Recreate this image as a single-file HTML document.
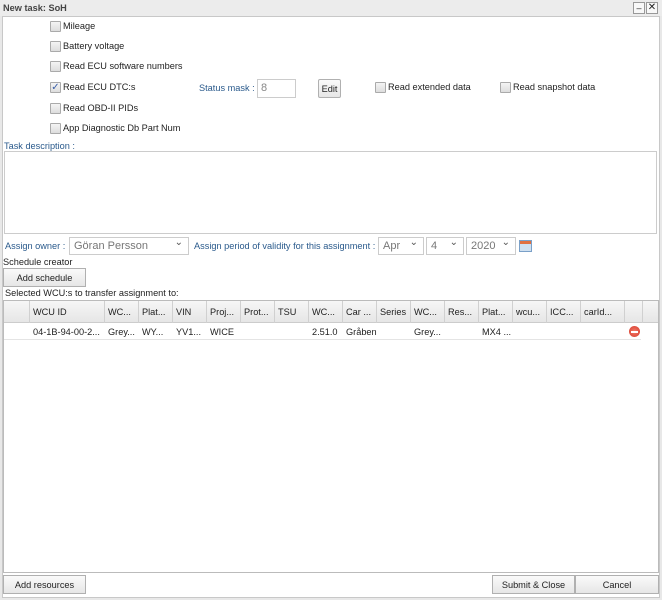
<!DOCTYPE html>
<html><head><meta charset="utf-8"><style>
*{box-sizing:border-box;margin:0;padding:0}
body{width:662px;height:600px;background:#e8e8e8;font-family:"Liberation Sans",sans-serif;font-size:9.2px;color:#222;position:relative;overflow:hidden}
.a{position:absolute;white-space:nowrap}
.cb{position:absolute;width:11px;height:11px;border:1px solid #aaa;background:linear-gradient(#f4f4f4,#ddd);border-radius:1px}
.lbl{color:#2a5a8c}
.btn{position:absolute;border:1px solid #b0b0b0;background:linear-gradient(#fafafa,#e6e6e6);text-align:center;font-size:9.2px;color:#222}
.sel{position:absolute;height:18px;border:1px solid #ccc;background:#fff;color:#777;font-size:11px;padding:2px 4px}
.sel:after{content:"⌄";position:absolute;right:5px;top:-1px;font-size:10px;color:#555}
.th{position:absolute;top:0;height:22px;border-right:1px solid #d0d0d0;padding:6px 3px;overflow:hidden;font-size:9.2px}
.td{position:absolute;top:0;height:17px;padding:4px 3px;font-size:9.2px}
</style></head><body>
<div class="a" style="left:0;top:0;width:662px;height:16px;background:#ececec"></div>
<div class="a" style="left:3px;top:3px;font-weight:bold;color:#444;font-size:9.2px">New task: SoH</div>
<div class="a" style="left:633px;top:2px;width:12px;height:12px;border:1px solid #999;background:#f8f8f8;font-size:9px;text-align:center;line-height:10px">–</div>
<div class="a" style="left:646px;top:2px;width:12px;height:12px;border:1px solid #999;background:#f8f8f8;font-size:10px;text-align:center;line-height:10px">✕</div>
<div class="a" style="left:2px;top:16px;width:658px;height:582px;background:#fff;border:1px solid #c8c8c8"></div>

<div class="cb" style="left:50px;top:21px"></div><div class="a" style="left:63px;top:21px">Mileage</div>
<div class="cb" style="left:50px;top:41px"></div><div class="a" style="left:63px;top:41px">Battery voltage</div>
<div class="cb" style="left:50px;top:61px"></div><div class="a" style="left:63px;top:61px">Read ECU software numbers</div>
<div class="cb" style="left:50px;top:82px;color:#3a5fa8;font-size:10px;line-height:9px;text-align:center">✓</div><div class="a" style="left:63px;top:82px">Read ECU DTC:s</div>
<div class="cb" style="left:50px;top:103px"></div><div class="a" style="left:63px;top:103px">Read OBD-II PIDs</div>
<div class="cb" style="left:50px;top:123px"></div><div class="a" style="left:63px;top:123px">App Diagnostic Db Part Num</div>
<div class="a lbl" style="left:199px;top:83px">Status mask :</div>
<div class="a" style="left:257px;top:79px;width:39px;height:19px;border:1px solid #ccc;color:#888;font-size:11px;padding:2px 3px">8</div>
<div class="btn" style="left:318px;top:79px;width:23px;height:19px;border-radius:2px;padding-top:4px">Edit</div>
<div class="cb" style="left:375px;top:82px"></div><div class="a" style="left:388px;top:82px">Read extended data</div>
<div class="cb" style="left:500px;top:82px"></div><div class="a" style="left:513px;top:82px">Read snapshot data</div>

<div class="a lbl" style="left:4px;top:141px">Task description :</div>
<div class="a" style="left:4px;top:151px;width:653px;height:83px;border:1px solid #ccc"></div>

<div class="a lbl" style="left:5px;top:241px">Assign owner :</div>
<div class="sel" style="left:69px;top:237px;width:120px">Göran Persson</div>
<div class="a lbl" style="left:194px;top:241px">Assign period of validity for this assignment :</div>
<div class="sel" style="left:378px;top:237px;width:46px">Apr</div>
<div class="sel" style="left:426px;top:237px;width:38px">4</div>
<div class="sel" style="left:466px;top:237px;width:50px">2020</div>
<div class="a" style="left:519px;top:240px;width:13px;height:12px;border:1px solid #7aa0c8;background:linear-gradient(#e07040 0 3px,#cfe0f0 3px)"></div>
<div class="a" style="left:3px;top:257px">Schedule creator</div>
<div class="btn" style="left:3px;top:268px;width:83px;height:19px;padding-top:4px">Add schedule</div>
<div class="a" style="left:5px;top:288px">Selected WCU:s to transfer assignment to:</div>

<div class="a" style="left:3px;top:300px;width:656px;height:273px;border:1px solid #bbb;background:#fff">
 <div class="a" style="left:0;top:0;width:654px;height:22px;background:linear-gradient(#f6f6f6,#e6e6e6);border-bottom:1px solid #ccc">
  <div class="th" style="left:0;width:26px"></div>
  <div class="th" style="left:26px;width:75px">WCU ID</div>
  <div class="th" style="left:101px;width:34px">WC...</div>
  <div class="th" style="left:135px;width:34px">Plat...</div>
  <div class="th" style="left:169px;width:34px">VIN</div>
  <div class="th" style="left:203px;width:34px">Proj...</div>
  <div class="th" style="left:237px;width:34px">Prot...</div>
  <div class="th" style="left:271px;width:34px">TSU</div>
  <div class="th" style="left:305px;width:34px">WC...</div>
  <div class="th" style="left:339px;width:34px">Car ...</div>
  <div class="th" style="left:373px;width:34px">Series</div>
  <div class="th" style="left:407px;width:34px">WC...</div>
  <div class="th" style="left:441px;width:34px">Res...</div>
  <div class="th" style="left:475px;width:34px">Plat...</div>
  <div class="th" style="left:509px;width:34px">wcu...</div>
  <div class="th" style="left:543px;width:34px">ICC...</div>
  <div class="th" style="left:577px;width:44px">carId...</div>
  <div class="th" style="left:621px;width:18px"></div>
 </div>
 <div class="a" style="left:0;top:22px;width:637px;height:17px;border-bottom:1px solid #e4e4e4">
  <div class="td" style="left:26px">04-1B-94-00-2...</div>
  <div class="td" style="left:101px">Grey...</div>
  <div class="td" style="left:135px">WY...</div>
  <div class="td" style="left:169px">YV1...</div>
  <div class="td" style="left:203px">WICE</div>
  <div class="td" style="left:305px">2.51.0</div>
  <div class="td" style="left:339px">Gråben</div>
  <div class="td" style="left:407px">Grey...</div>
  <div class="td" style="left:475px">MX4 ...</div>
  <div class="a" style="left:625px;top:3px;width:11px;height:11px;border-radius:50%;background:radial-gradient(#f47a6a,#d43a2a)"><div style="position:absolute;left:2px;top:5px;width:7px;height:1.5px;background:#fff"></div></div>
 </div>
</div>

<div class="btn" style="left:3px;top:575px;width:83px;height:19px;padding-top:4px">Add resources</div>
<div class="btn" style="left:492px;top:575px;width:83px;height:19px;padding-top:4px">Submit &amp; Close</div>
<div class="btn" style="left:575px;top:575px;width:84px;height:19px;padding-top:4px">Cancel</div>
</body></html>
